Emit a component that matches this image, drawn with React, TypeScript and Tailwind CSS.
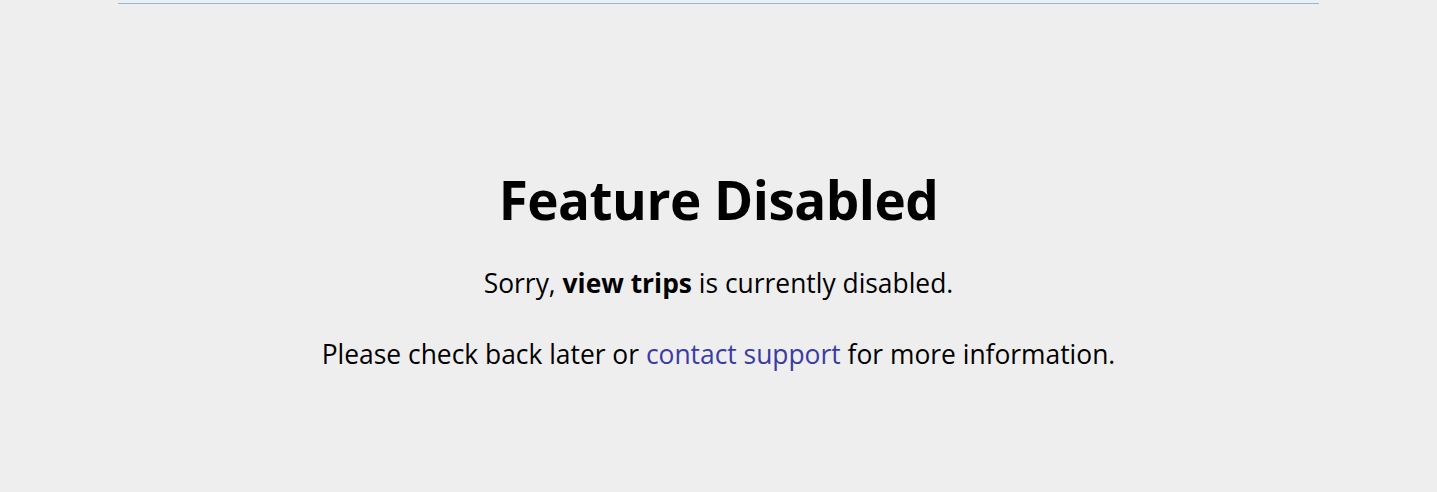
export default function App() {
  return (
    <div className="min-h-[492px] bg-[#eeeeee] text-black font-['Open_Sans',sans-serif]">
      <div className="max-w-[1201px] mx-auto h-[4px] border-b border-[#93b8de]" />
      <main className="text-center pt-[161px]">
        <h1 className="text-[53px] leading-[70px] font-bold tracking-[-0.5px]">Feature Disabled</h1>
        <p className="mt-[32px] text-[26.4px] leading-[32px]">
          Sorry, <strong className="font-bold">view trips</strong> is currently disabled.
        </p>
        <p className="mt-[39px] text-[26.4px] leading-[32px]">
          Please check back later or{' '}
          <a href="#" className="text-[#3b3ba6]">contact support</a> for more information.
        </p>
      </main>
    </div>
  )
}
